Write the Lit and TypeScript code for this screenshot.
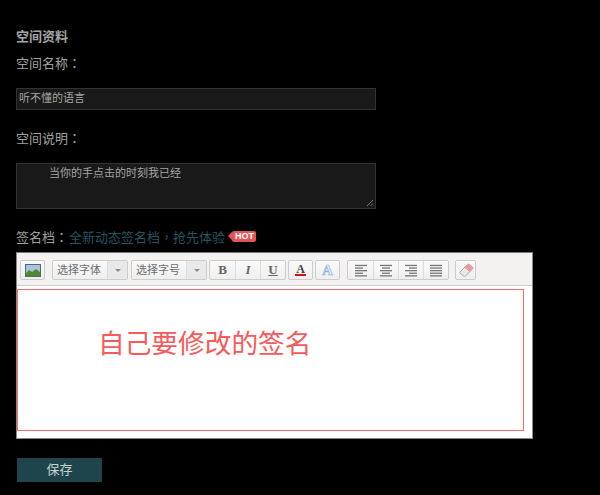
import { LitElement, html, css, svg } from "lit";
import { customElement } from "lit/decorators.js";

const alignIcon = (rows: [number, number][]) => html`<svg width="14" height="13" viewBox="0 0 14 13">
  ${rows.map(([x, w], i) => svg`<rect x=${x} y=${i * 2.6 + 0.8} width=${w} height="1.3" fill="#777"></rect>`)}
</svg>`;

@customElement("app-root")
export class AppRoot extends LitElement {
  static styles = css`
    :host { display: block; width: 600px; height: 495px; background: #000; overflow: hidden;
      font-family: "Liberation Sans", "Noto Sans CJK SC", sans-serif; font-size: 13px; color: #b5b5b5; }
    .page { padding: 29px 0 0 16px; display: flex; flex-direction: column; align-items: flex-start; }
    .title { font-weight: bold; font-size: 13px; line-height: 16px; color: #a5a5a5; }
    .label { line-height: 18px; margin-top: 9px; color: #a0a0a0; }
    .p { font-family: "Noto Sans CJK TC", sans-serif; }
    .input { box-sizing: border-box; width: 360px; height: 22px; margin-top: 15px; background: #191919; border: 1px solid #333;
      padding: 0 2px; font-size: 11px; line-height: 19px; color: #a5a5a5; }
    .label.second { margin-top: 19px; }
    .area { position: relative; box-sizing: border-box; width: 360px; height: 46px; margin-top: 15px; background: #191919; border: 1px solid #333;
      padding: 1px 0 0 32px; font-size: 11px; line-height: 16px; color: #a5a5a5; }
    .grip { position: absolute; right: 1px; bottom: 1px; }
    .sig { display: flex; align-items: center; margin-top: 18px; height: 18px; font-size: 13px; }
    .sig .name { color: #a0a0a0; }
    .sig .promo { color: #245560; margin-left: 1px; }
    .hot { position: relative; margin-left: 7px; background: #e25555; color: #fff; font-size: 9px; font-weight: bold; line-height: 11px;
      padding: 0 2px 0 3px; border-radius: 2px; height: 11px; }
    .hot::before { content: ""; position: absolute; left: -4px; top: 1.5px; border: 4px solid transparent; border-left: 0; border-right-color: #e25555; }
    .editor { box-sizing: border-box; width: 517px; height: 187px; margin-top: 7px; background: #fff; border: 1px solid #8a8a8a; border-top-color: #777; }
    .toolbar { box-sizing: border-box; height: 33px; background: #f3f2f0; border-bottom: 1px solid #d0d0d0; display: flex; align-items: flex-start; padding: 7px 0 0 3px; }
    .group { display: flex; height: 20px; box-sizing: border-box; border: 1px solid #ccc; border-radius: 2px; background: linear-gradient(#fafafa, #efefef); }
    .group > * + * { border-left: 1px solid #dcdcdc; }
    .cell { width: 25px; height: 18px; display: flex; align-items: center; justify-content: center; box-sizing: border-box; }
    .pic .cell { width: 23px; }
    .font { margin-left: 7px; }
    .size { margin-left: 3px; }
    .style { margin-left: 2px; }
    .color-a { margin-left: 2px; }
    .color-a .cell { width: 23px; }
    .bg-a { margin-left: 2px; }
    .bg-a .cell { width: 23px; }
    .align { margin-left: 7px; }
    .erase { margin-left: 6px; }
    .erase .cell { width: 19px; }
    .glyph { font-family: "Liberation Serif", serif; font-size: 13px; font-weight: bold; color: #666; line-height: 14px; }
    .glyph.i { font-style: italic; }
    .glyph.u { text-decoration: underline; font-weight: bold; }
    .color { display: flex; flex-direction: column; align-items: center; line-height: 10px; font-size: 12px; color: #444; font-family: "Liberation Serif", serif; font-weight: bold; }
    .color i { display: block; width: 11px; height: 2px; background: #d81010; }
    .outline { font-family: "Liberation Serif", serif; font-weight: bold; font-size: 15px; line-height: 16px; color: #e3edfb; -webkit-text-stroke: 0.7px #8db2ea; }
    .select { font-size: 11px; color: #6d6d6d; width: 54px; padding-left: 4px; box-sizing: border-box; height: 18px; line-height: 18px; }
    .caret { width: 20px; height: 18px; display: flex; align-items: center; justify-content: center; background: #e9e9e9; box-sizing: border-box; }
    .caret::after { content: ""; border: 3.5px solid transparent; border-top: 3.5px solid #8a8a8a; border-bottom: 0; }
    .content { box-sizing: border-box; width: 507px; height: 142px; margin-top: 3px; border: 1px solid #f56a6a; padding: 27px 0 0 80px; font-size: 26.7px; line-height: 54px; color: #f75a5a; }
    .save { box-sizing: border-box; width: 85px; height: 24px; margin: 19px 0 0 1px; border: 0; padding: 0; background: #1f454c; color: #c9d2d3; font: inherit; font-size: 13px; line-height: 24px; text-align: center; }
  `;

  render() {
    return html`<div class="page">
      <div class="title">空间资料</div>
      <div class="label">空间名称<span class="p">：</span></div>
      <div class="input">听不懂的语言</div>
      <div class="label second">空间说明<span class="p">：</span></div>
      <div class="area">当你的手点击的时刻我已经
        <svg class="grip" width="8" height="8" viewBox="0 0 8 8"><path d="M1 7 7 1M4.500 7 7 4.500" stroke="#777" fill="none"></path></svg>
      </div>
      <div class="sig"><span class="name">签名档<span class="p">：</span></span><span class="promo">全新动态签名档<span class="p">，</span>抢先体验</span><span class="hot">HOT</span></div>
      <div class="editor">
        <div class="toolbar">
          <div class="group pic"><div class="cell">
            <svg width="16" height="13" viewBox="0 0 16 13">
              <rect x=".5" y=".5" width="15" height="12" fill="#a9c3e0" stroke="#567"></rect>
              <path d="M1 12V9l3-3 3 2 4-3 4 3v4z" fill="#4c8a2c"></path>
            </svg>
          </div></div>
          <div class="group font"><div class="select">选择字体</div><div class="caret"></div></div>
          <div class="group size"><div class="select">选择字号</div><div class="caret"></div></div>
          <div class="group style">
            <div class="cell"><span class="glyph">B</span></div>
            <div class="cell"><span class="glyph i">I</span></div>
            <div class="cell"><span class="glyph u">U</span></div>
          </div>
          <div class="group color-a"><div class="cell"><span class="color">A<i></i></span></div></div>
          <div class="group bg-a"><div class="cell"><span class="outline">A</span></div></div>
          <div class="group align">
            <div class="cell">${alignIcon([[1, 12], [1, 8], [1, 12], [1, 8], [1, 12]])}</div>
            <div class="cell">${alignIcon([[1, 12], [3, 8], [1, 12], [3, 8], [1, 12]])}</div>
            <div class="cell">${alignIcon([[1, 12], [5, 8], [1, 12], [5, 8], [1, 12]])}</div>
            <div class="cell">${alignIcon([[1, 12], [1, 12], [1, 12], [1, 12], [1, 12]])}</div>
          </div>
          <div class="group erase"><div class="cell">
            <svg width="16" height="16" viewBox="0 0 16 16">
              <path d="M1.500 10.500 9.500 2.500a1.500 1.500 0 0 1 2 0l3 2.500a1.500 1.500 0 0 1 0 2L7.500 14a1.500 1.500 0 0 1-2 0z" fill="#e9e9e9" stroke="#aaa"></path>
              <path d="M9.500 2.500a1.500 1.500 0 0 1 2 0l3 2.500a1.500 1.500 0 0 1 0 2L11.500 10 6.500 5.500z" fill="#ea9a9a"></path>
            </svg>
          </div></div>
        </div>
        <div class="content">自己要修改的签名</div>
      </div>
      <button class="save">保存</button>
    </div>`;
  }
}
